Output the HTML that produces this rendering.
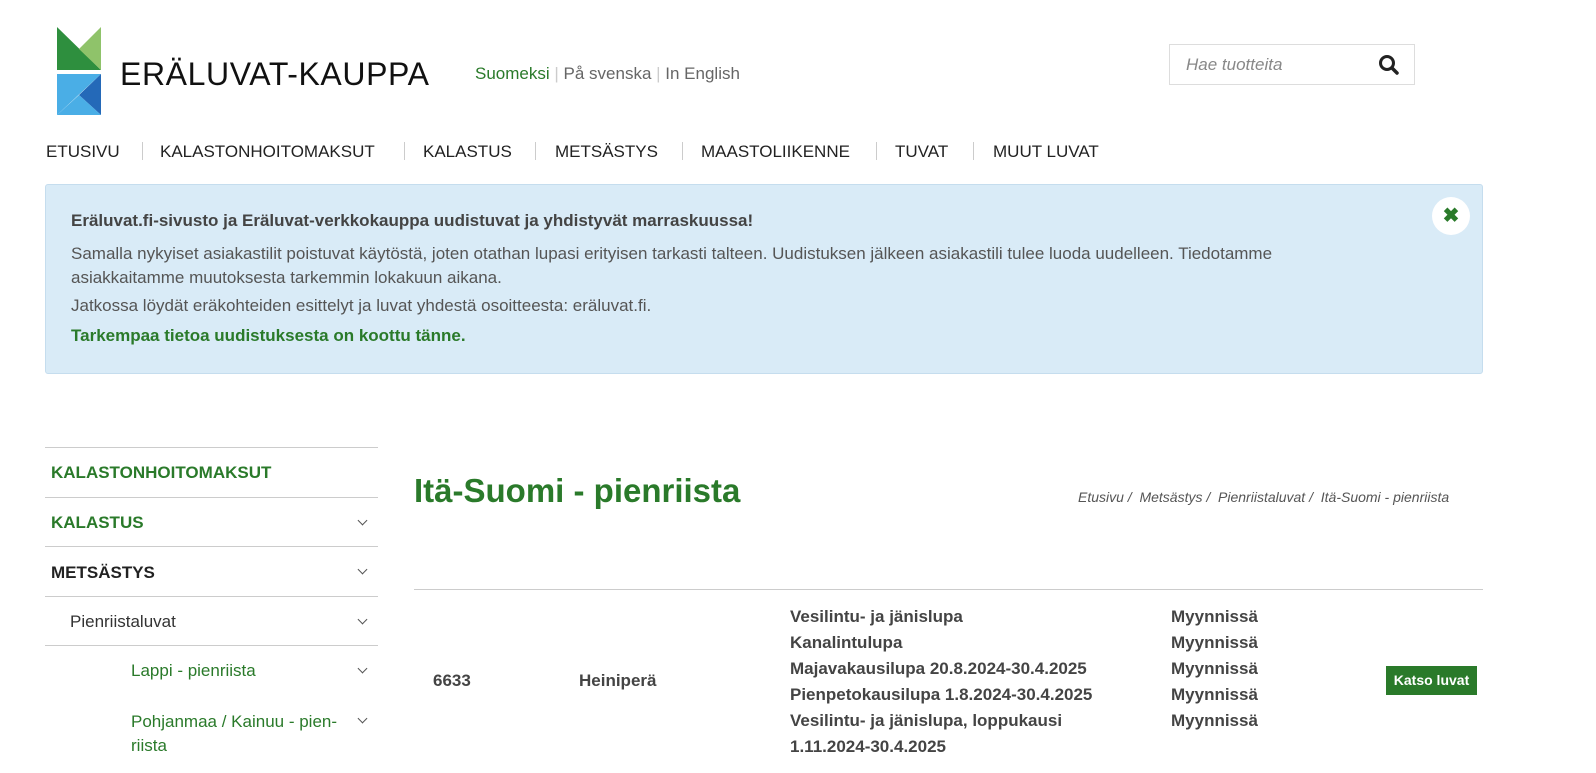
<!DOCTYPE html>
<html><head><meta charset="utf-8"><style>
*{margin:0;padding:0;box-sizing:border-box}
body{width:1596px;height:773px;overflow:hidden;background:#fff;font-family:"Liberation Sans",Arial,sans-serif;color:#333;position:relative}
.a{position:absolute;white-space:nowrap}
.g{color:#2a7a2a}
.nav{font-size:17px;color:#222;top:142px}
.sep{position:absolute;top:142px;width:1px;height:18px;background:#ccc}
.side{position:absolute;left:45px;width:333px;border-top:1px solid #ccc}
.chev{position:absolute;right:12px;width:7px;height:7px;border-right:1px solid #555;border-bottom:1px solid #555;transform:rotate(45deg)}
.row{font-size:17px;color:#444;font-weight:bold}
</style></head><body>
<svg class="a" style="left:57px;top:27px" width="45" height="89" viewBox="0 0 45 89">
<polygon points="0,0 44,43 0,43" fill="#2e8f3e"/>
<polygon points="44,0 44,43 22,22" fill="#8fc36a"/>
<polygon points="0,47 44,47 0,88" fill="#4aaee6"/>
<polygon points="44,47 44,88 22,68" fill="#2469b8"/>
<polygon points="0,88 22,68 44,88" fill="#4aaee6"/>
</svg>
<div class="a" style="left:120px;top:56px;font-size:32px;letter-spacing:0.6px;color:#111">ERÄLUVAT-KAUPPA</div>
<div class="a" style="left:475px;top:64px;font-size:17px;color:#666"><span class="g">Suomeksi</span> <span style="color:#ccc">|</span> På svenska <span style="color:#ccc">|</span> In English</div>
<div class="a" style="left:1169px;top:44px;width:246px;height:41px;border:1px solid #ddd"></div>
<div class="a" style="left:1186px;top:55px;font-size:17px;font-style:italic;color:#888">Hae tuotteita</div>
<svg class="a" style="left:1378px;top:54px" width="22" height="22" viewBox="0 0 22 22"><circle cx="9" cy="9" r="6.5" fill="none" stroke="#222" stroke-width="3"/><line x1="14" y1="14" x2="19" y2="19" stroke="#222" stroke-width="3.5" stroke-linecap="round"/></svg>
<div class="a nav" style="left:46px">ETUSIVU</div>
<div class="sep" style="left:142px"></div>
<div class="a nav" style="left:160px">KALASTONHOITOMAKSUT</div>
<div class="sep" style="left:404px"></div>
<div class="a nav" style="left:423px">KALASTUS</div>
<div class="sep" style="left:535px"></div>
<div class="a nav g" style="left:555px">METSÄSTYS</div>
<div class="sep" style="left:682px"></div>
<div class="a nav" style="left:701px">MAASTOLIIKENNE</div>
<div class="sep" style="left:876px"></div>
<div class="a nav" style="left:895px">TUVAT</div>
<div class="sep" style="left:973px"></div>
<div class="a nav" style="left:993px">MUUT LUVAT</div>
<div class="a" style="left:45px;top:184px;width:1438px;height:190px;background:#d9ebf7;border:1px solid #c5ddee;border-radius:3px"></div>
<div class="a" style="left:1432px;top:197px;width:38px;height:38px;border-radius:50%;background:#fff;color:#2a7a2a;font-size:20px;font-weight:bold;text-align:center;line-height:38px">✖</div>
<div class="a" style="left:71px;top:211px;font-size:17px;font-weight:bold;color:#444">Eräluvat.fi-sivusto ja Eräluvat-verkkokauppa uudistuvat ja yhdistyvät marraskuussa!</div>
<div class="a" style="left:71px;top:242px;font-size:17px;color:#555;line-height:24px">Samalla nykyiset asiakastilit poistuvat käytöstä, joten otathan lupasi erityisen tarkasti talteen. Uudistuksen jälkeen asiakastili tulee luoda uudelleen. Tiedotamme<br>asiakkaitamme muutoksesta tarkemmin lokakuun aikana.</div>
<div class="a" style="left:71px;top:296px;font-size:17px;color:#555">Jatkossa löydät eräkohteiden esittelyt ja luvat yhdestä osoitteesta: eräluvat.fi.</div>
<div class="a g" style="left:71px;top:326px;font-size:17px;font-weight:bold">Tarkempaa tietoa uudistuksesta on koottu tänne.</div>
<div class="side" style="top:447px;height:50px"><div class="a g" style="left:6px;top:15px;font-size:17px;font-weight:bold">KALASTONHOITOMAKSUT</div></div>
<div class="side" style="top:497px;height:50px"><div class="a g" style="left:6px;top:15px;font-size:17px;font-weight:bold">KALASTUS</div><div class="chev" style="top:19px"></div></div>
<div class="side" style="top:546px;height:50px"><div class="a" style="left:6px;top:16px;font-size:17px;font-weight:bold;color:#222">METSÄSTYS</div><div class="chev" style="top:19px"></div></div>
<div class="side" style="top:596px;height:50px"><div class="a" style="left:25px;top:15px;font-size:17px;color:#333">Pienriistaluvat</div><div class="chev" style="top:19px"></div></div>
<div class="side" style="top:645px;height:128px"><div class="a g" style="left:86px;top:15px;font-size:17px">Lappi - pienriista</div><div class="chev" style="top:19px"></div>
<div class="a g" style="left:86px;top:64px;font-size:17px;line-height:24px">Pohjanmaa / Kainuu - pien-<br>riista</div><div class="chev" style="top:69px"></div></div>
<div class="a g" style="left:414px;top:472px;font-size:33px;font-weight:bold">Itä-Suomi - pienriista</div>
<div class="a" style="left:1078px;top:489px;font-size:14px;font-style:italic;color:#555">Etusivu /&nbsp; Metsästys /&nbsp; Pienriistaluvat /&nbsp; Itä-Suomi - pienriista</div>
<div class="a" style="left:414px;top:589px;width:1069px;height:1px;background:#ccc"></div>
<div class="a row" style="left:433px;top:671px">6633</div>
<div class="a row" style="left:579px;top:671px">Heiniperä</div>
<div class="a row" style="left:790px;top:604px;line-height:26px">Vesilintu- ja jänislupa<br>Kanalintulupa<br>Majavakausilupa 20.8.2024-30.4.2025<br>Pienpetokausilupa 1.8.2024-30.4.2025<br>Vesilintu- ja jänislupa, loppukausi<br>1.11.2024-30.4.2025</div>
<div class="a row" style="left:1171px;top:604px;line-height:26px">Myynnissä<br>Myynnissä<br>Myynnissä<br>Myynnissä<br>Myynnissä</div>
<div class="a" style="left:1386px;top:666px;width:91px;height:29px;background:#2a7a2a;color:#fff;font-size:14px;font-weight:bold;text-align:center;line-height:29px">Katso luvat</div>
</body></html>
